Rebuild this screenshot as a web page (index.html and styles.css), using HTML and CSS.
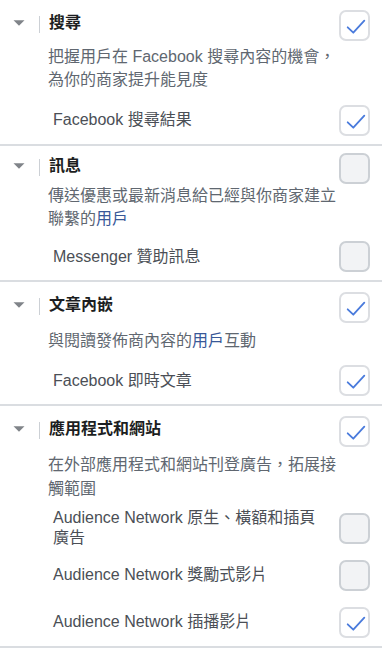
FILE: index.html
```html
<!DOCTYPE html>
<html lang="zh-Hant">
<head>
<meta charset="utf-8">
<title>版位</title>
<link rel="stylesheet" href="styles.css">
</head>
<body>
<div class="list">
  <section class="group">
    <div class="group-head">
      <svg class="caret" viewBox="0 0 12 6"><path d="M0.5 0.3h11L6 5.8z"/></svg>
      <span class="bar"></span>
      <h3 class="group-title">搜尋</h3>
      <span class="check"><svg viewBox="0 0 27 27"><path d="M6.7 15.3l5.6 5.4 11-12"/></svg></span>
    </div>
    <p class="group-desc">把握用戶在 Facebook 搜尋內容的機會，為你的商家提升能見度</p>
    <ul class="options">
      <li class="option"><span class="option-label">Facebook 搜尋結果</span><span class="check"><svg viewBox="0 0 27 27"><path d="M6.7 15.3l5.6 5.4 11-12"/></svg></span></li>
    </ul>
  </section>

  <section class="group group--tight">
    <div class="group-head">
      <svg class="caret" viewBox="0 0 12 6"><path d="M0.5 0.3h11L6 5.8z"/></svg>
      <span class="bar"></span>
      <h3 class="group-title">訊息</h3>
      <span class="check check--off"></span>
    </div>
    <p class="group-desc">傳送優惠或最新消息給已經與你商家建立<span class="phrase">聯繫的<a class="link">用戶</a></span></p>
    <ul class="options">
      <li class="option"><span class="option-label">Messenger 贊助訊息</span><span class="check check--off"></span></li>
    </ul>
  </section>

  <section class="group">
    <div class="group-head">
      <svg class="caret" viewBox="0 0 12 6"><path d="M0.5 0.3h11L6 5.8z"/></svg>
      <span class="bar"></span>
      <h3 class="group-title">文章內嵌</h3>
      <span class="check"><svg viewBox="0 0 27 27"><path d="M6.7 15.3l5.6 5.4 11-12"/></svg></span>
    </div>
    <p class="group-desc">與閱讀發佈商內容的<a class="link">用戶</a>互動</p>
    <ul class="options">
      <li class="option"><span class="option-label">Facebook 即時文章</span><span class="check"><svg viewBox="0 0 27 27"><path d="M6.7 15.3l5.6 5.4 11-12"/></svg></span></li>
    </ul>
  </section>

  <section class="group">
    <div class="group-head">
      <svg class="caret" viewBox="0 0 12 6"><path d="M0.5 0.3h11L6 5.8z"/></svg>
      <span class="bar"></span>
      <h3 class="group-title">應用程式和網站</h3>
      <span class="check"><svg viewBox="0 0 27 27"><path d="M6.7 15.3l5.6 5.4 11-12"/></svg></span>
    </div>
    <p class="group-desc">在外部應用程式和網站刊登廣告，拓展接觸範圍</p>
    <ul class="options">
      <li class="option"><span class="option-label">Audience Network 原生、橫額和插頁廣告</span><span class="check check--off"></span></li>
      <li class="option"><span class="option-label">Audience Network 獎勵式影片</span><span class="check check--off"></span></li>
      <li class="option"><span class="option-label">Audience Network 插播影片</span><span class="check"><svg viewBox="0 0 27 27"><path d="M6.7 15.3l5.6 5.4 11-12"/></svg></span></li>
    </ul>
  </section>
</div>
</body>
</html>
```

FILE: styles.css
```css
html, body {
  margin: 0;
  padding: 0;
  background: #ffffff;
}

body {
  font-family: "Liberation Sans", "Noto Sans CJK TC", sans-serif;
  font-size: 16px;
  color: #1c1e21;
}

.group {
  border-bottom: 2px solid #dadde1;
}

.group-head {
  display: flex;
  align-items: flex-start;
  padding: 10px 12px 0 13px;
}

.caret {
  flex: none;
  width: 12px;
  height: 6px;
  margin-top: 10px;
  fill: #808489;
}

.bar {
  flex: none;
  width: 1px;
  height: 17px;
  margin: 6px 9px 0 14px;
  background: #ccd0d5;
}

.group-title {
  flex: 1;
  margin: 0;
  font-size: 16px;
  font-weight: bold;
  line-height: 26px;
  color: #1c1e21;
}

.check {
  flex: none;
  box-sizing: border-box;
  width: 31px;
  height: 31px;
  border: 2px solid #dcdee2;
  border-radius: 7px;
  background: #ffffff;
}

.check svg {
  display: block;
  width: 27px;
  height: 27px;
  fill: none;
  stroke: #4a7bdc;
  stroke-width: 1.8;
  stroke-linecap: round;
  stroke-linejoin: round;
}

.check--off {
  background: #f2f3f5;
  border-color: #ccd0d5;
}

.group-desc {
  margin: 6px 0 5px;
  padding: 0 40px 0 48px;
  font-size: 16px;
  line-height: 23.25px;
  color: #606770;
}

.group:first-child .group-desc {
  margin-top: 4px;
}

.phrase {
  white-space: nowrap;
}

.link {
  color: #385898;
  text-decoration: none;
}

.options {
  list-style: none;
  margin: 0;
  padding: 0;
}

.option {
  display: flex;
  align-items: center;
  min-height: 47px;
  padding: 0 12px 0 53px;
}

.option-label {
  flex: 1;
  margin-right: 12px;
  font-size: 16px;
  line-height: 20px;
  color: #4b4f56;
}

.group--tight .group-head {
  padding-top: 7px;
}

.group--tight .group-desc {
  margin-top: 0;
  margin-bottom: 3px;
}
```
